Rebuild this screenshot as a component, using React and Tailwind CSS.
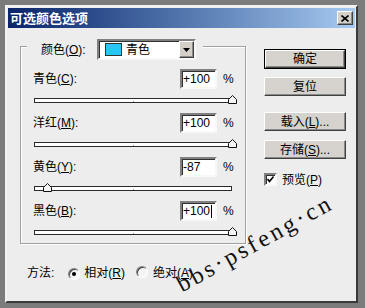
import { Fragment } from "react";

const channels = [
  { name: "青色", key: "C", value: 100, text: "+100" },
  { name: "洋红", key: "M", value: 100, text: "+100" },
  { name: "黄色", key: "Y", value: -87, text: "-87" },
  { name: "黑色", key: "B", value: 100, text: "+100", caret: true },
];

const raised =
  "border border-t-white border-l-white border-r-[#404040] border-b-[#404040] shadow-[inset_-1px_-1px_0_#8a8a8a]";
const sunken =
  "border-2 border-t-[#808080] border-l-[#808080] border-r-[#f8f8f8] border-b-[#f8f8f8] shadow-[inset_1px_1px_0_#303030]";

function Slider({ value }) {
  // track is 198px wide, thumb centred on the value
  const left = ((value + 100) / 200) * 198 - 5;
  return (
    <div className="relative mt-[9px] mx-px h-[5px] border border-[#2a2a2a] bg-white">
      <div className="absolute left-[98px] bottom-0 h-px w-px bg-[#9a9a9a]" />
      <svg
        className="absolute top-[-4px]"
        style={{ left }}
        width="9"
        height="9"
        viewBox="0 0 9 9"
      >
        <polygon
          points="4.5,0.5 8.5,4.5 8.5,8.5 0.5,8.5 0.5,4.5"
          fill="#f4f4f4"
          stroke="#111"
          strokeWidth="1"
        />
      </svg>
    </div>
  );
}

function Button({ label, mn, tail, primary }) {
  const body = (
    <div
      className={`flex h-full w-full items-center justify-center bg-[#d6d3ce] ${raised}`}
    >
      <span>
        {label}
        {mn && (
          <>
            (<u>{mn}</u>)
          </>
        )}
        {tail}
      </span>
    </div>
  );
  if (primary)
    return <div className="h-[20px] w-[82px] border border-black">{body}</div>;
  return <div className="h-[19px] w-[82px]">{body}</div>;
}

function Radio({ checked }) {
  return (
    <span className="relative inline-flex h-[12px] w-[12px] items-center justify-center rounded-full border border-t-[#808080] border-l-[#808080] border-r-white border-b-white bg-[#f4f4f4] shadow-[inset_1px_1px_0_#404040]">
      {checked && <span className="h-[4px] w-[4px] rounded-full bg-black" />}
    </span>
  );
}

export default function App() {
  return (
    <div className="relative h-[308px] w-[365px] overflow-hidden bg-[#7b7b7b] pl-[5px] pt-[5px] text-[12px] leading-none text-black font-['Liberation_Sans','Noto_Sans_CJK_SC',sans-serif]">
      <div className="flex h-[298px] w-[353px] flex-col border-2 border-t-[#f2f2f2] border-l-[#f2f2f2] border-r-[#3a3a3a] border-b-[#3a3a3a] bg-[#ededed] p-px">
        {/* title bar */}
        <div className="flex h-[20px] items-center justify-between bg-gradient-to-r from-[#0a246a] to-[#a6caf0] pl-[2px] pr-[2px]">
          <span className="text-[13px] font-bold text-white">可选颜色选项</span>
          <div
            className={`flex h-[14px] w-[16px] items-center justify-center bg-[#d4d0c8] ${raised}`}
          >
            <svg width="8" height="7" viewBox="0 0 8 7">
              <path d="M0.5 0.5 L7.5 6.5 M7.5 0.5 L0.5 6.5" stroke="#000" strokeWidth="1.6" />
            </svg>
          </div>
        </div>

        <div className="flex flex-1 flex-col">
          <div className="flex">
            {/* group box */}
            <div className="ml-[12px] mt-[18px] flex w-[226px] flex-col border border-[#a0a0a0] px-[12px] pb-[8px] shadow-[inset_1px_1px_0_#fff,1px_1px_0_#fff]">
              <div className="-mt-[8px] ml-[-6px] flex h-[21px] w-fit items-center bg-[#ededed] pl-[14px] pr-[7px]">
                <span className="w-[56px]">
                  颜色(<u>O</u>):
                </span>
                <div className={`flex h-[21px] w-[99px] items-center bg-white ${sunken}`}>
                  <span className="ml-[6px] h-[13px] w-[17px] border border-[#333] bg-[#26c6f5]" />
                  <span className="ml-[4px] flex-1">青色</span>
                  <div
                    className={`flex h-[17px] w-[15px] items-center justify-center bg-[#d4d0c8] ${raised}`}
                  >
                    <svg width="7" height="4" viewBox="0 0 7 4">
                      <polygon points="0,0 7,0 3.5,4" fill="#000" />
                    </svg>
                  </div>
                </div>
              </div>

              <div className="mt-[9px] flex flex-col gap-[10px]">
                {channels.map((c) => (
                  <div key={c.key} className="flex flex-col">
                    <div className="flex h-[20px] items-center">
                      <span className="flex-1">
                        {c.name}(<u>{c.key}</u>):
                      </span>
                      <div className={`flex h-[20px] w-[37px] items-center bg-white pl-px ${sunken}`}>
                        <span>{c.text}</span>
                        {c.caret && <span className="ml-px h-[13px] w-px bg-black" />}
                      </div>
                      <span className="ml-[6px] w-[10px]">%</span>
                    </div>
                    <Slider value={c.value} />
                  </div>
                ))}
              </div>
            </div>

            {/* buttons */}
            <div className="ml-[18px] mt-[21px] flex flex-col">
              <Button label="确定" primary />
              <div className="mt-[8px]">
                <Button label="复位" />
              </div>
              <div className="mt-[16px]">
                <Button label="载入" mn="L" tail="..." />
              </div>
              <div className="mt-[9px]">
                <Button label="存储" mn="S" tail="..." />
              </div>
              <div className="mt-[14px] flex items-center">
                <span className={`flex h-[13px] w-[13px] items-center justify-center bg-white ${sunken}`}>
                  <svg width="7" height="7" viewBox="0 0 7 7">
                    <path d="M0.5 3 L2.5 5.5 L6.5 0.5" stroke="#000" strokeWidth="1.6" fill="none" />
                  </svg>
                </span>
                <span className="ml-[5px]">
                  预览(<u>P</u>)
                </span>
              </div>
            </div>
          </div>

          {/* method row */}
          <div className="ml-[19px] mt-[22px] flex items-center">
            <span>方法:</span>
            <span className="ml-[14px]">
              <Radio checked />
            </span>
            <span className="ml-[4px]">
              相对(<u>R</u>)
            </span>
            <span className="ml-[11px]">
              <Radio />
            </span>
            <span className="ml-[5px]">
              绝对(<u>A</u>)
            </span>
          </div>
        </div>
      </div>

      {/* watermark */}
      <span className="absolute left-[184px] top-[272px] origin-bottom-left -rotate-[29deg] whitespace-nowrap font-['Liberation_Serif',serif] text-[24px] leading-none tracking-[3px] text-[#111]">
        bbs·psfeng·cn
      </span>
    </div>
  );
}
